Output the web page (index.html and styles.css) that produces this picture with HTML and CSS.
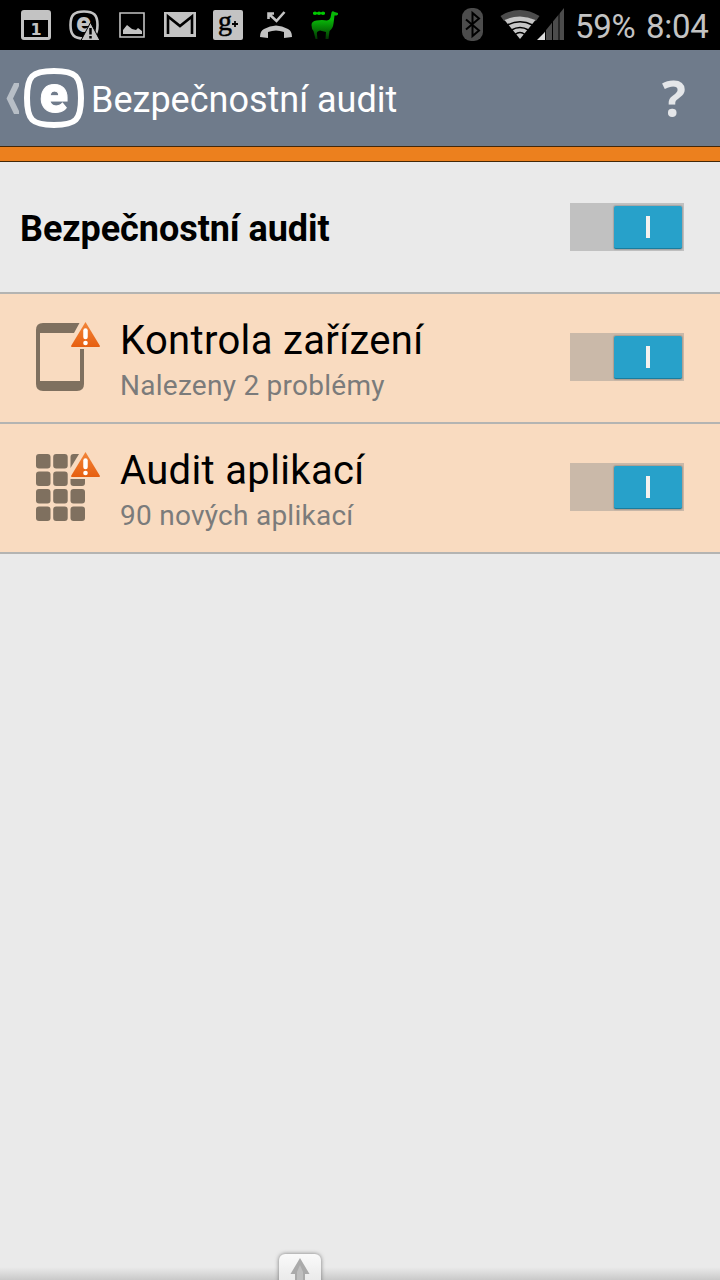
FILE: index.html
```html
<!DOCTYPE html>
<html lang="cs">
<head>
<meta charset="utf-8">
<title>Bezpečnostní audit</title>
<link rel="stylesheet" href="styles.css">
</head>
<body>
<div class="status">
  <div class="notifications">
    <svg class="slot" viewBox="0 0 48 50"><path fill="#c3c3c3" fill-rule="evenodd" d="M12 10h24q3 0 3 3v24q0 3-3 3H12q-3 0-3-3V13q0-3 3-3zM12 20v17h24V20z"/><text class="day" x="24" y="35" text-anchor="middle">1</text></svg>
    <svg class="slot" viewBox="0 0 48 50"><path d="M24 11.500C34 11.500 37.500 15 37.500 25S34 38.500 24 38.500 10.500 35 10.500 25 14 11.500 24 11.500z" fill="none" stroke="#c3c3c3" stroke-width="2.600"/><text class="mini-e" x="23.500" y="32" text-anchor="middle">e</text><path d="M30.500 22.500L40 40.500H21z" fill="#c3c3c3" stroke="#000" stroke-width="1"/><path d="M30.500 28v6.500M30.500 36v2.500" stroke="#000" stroke-width="2.500"/></svg>
    <svg class="slot" viewBox="0 0 48 50"><path d="M12 13h24v24H12z" fill="none" stroke="#c3c3c3" stroke-width="1.600"/><path d="M15 34v-4l4-5 5 4 4 1 2-2 4 3v3z" fill="#c3c3c3"/></svg>
    <svg class="slot" viewBox="0 0 48 50"><path d="M8 12h32v25H8z" fill="#c3c3c3"/><path d="M12 34V16.500L24 26l12-9.500V34" fill="none" stroke="#000" stroke-width="2.600"/></svg>
    <svg class="slot" viewBox="0 0 48 50"><rect x="9" y="10" width="30" height="30" rx="2" fill="#c3c3c3"/><text class="g" x="14" y="29.500">g</text><path d="M28 24h6M31 21v6" stroke="#000" stroke-width="1.800"/></svg>
    <svg class="slot" viewBox="0 0 48 50"><path fill="#c3c3c3" d="M8 37q0-6 4-8 12-7 24 0 4 2 4 8l-8 1v-6q-8-3-16 0v6z"/><path d="M17 14l7.500 7L32.500 12M16.500 19v-5.500H22" fill="none" stroke="#c3c3c3" stroke-width="2.600"/></svg>
    <svg class="slot" viewBox="0 0 48 50"><defs><linearGradient id="green" x1="0" y1="0" x2="0" y2="1"><stop offset=".3" stop-color="#08b808"/><stop offset="1" stop-color="#023502"/></linearGradient></defs><path fill="url(#green)" d="M11.500 25q0-4 5-4.500 6-1 10 0 3 0 4-3l1-5q1-2 3-.5l3.500 1q.5 2-1.500 2.500H34.500l-1 8q-.5 5-4 7.500l-1 8h-3l.5-7-6-1.500q-4 1-3 4l.5 4.500h-2l-2-8q-2-2-2-6z"/><path d="M13 13.300h12" stroke="#00c800" stroke-width="2"/><circle cx="15" cy="13.300" r="1.800" fill="#00c800"/><circle cx="19" cy="13.300" r="1.800" fill="#00c800"/><circle cx="23" cy="13.300" r="1.800" fill="#00c800"/></svg>
  </div>
  <svg class="signals" viewBox="0 0 112 50">
    <rect x="10" y="8" width="21" height="33" rx="9" fill="#4c4c4c"/>
    <path d="M14 19.500l13 11-6.500 5.500V13l6.500 5.500-13 11" fill="none" stroke="#000" stroke-width="2"/>
    <path fill="#4c4c4c" d="M48.500 16q19.500-12 39 0l-3.500 5q-16-8-32 0z"/>
    <path fill="#c6c6c6" d="M52.500 20q15.500-7 31 0L68 39z"/>
    <path d="M55.500 25q12.500-6.500 25 0M59.500 30q8.500-5 17 0M63 34.500q5-4 10 0" fill="none" stroke="#000" stroke-width="1.500"/>
    <path fill="#4c4c4c" d="M92 32.500L112 8v32H92z"/><path fill="#dedede" d="M85 40l8-8v8z"/>
    <path d="M93.500 8v33M100.500 8v33M107 8v33" stroke="#000" stroke-width="1"/>
  </svg>
  <span class="battery">59%</span><span class="clock">8:04</span>
</div>
<header class="bar">
  <svg class="back" viewBox="0 0 92 96"><path fill="#b7bec6" d="M14 33h5v3l-6 12.500 6 12.500v3h-5L6.500 48.500z"/><path d="M54 21C76 21 81 26 81 48S76 75 54 75 27 70 27 48 32 21 54 21z" fill="none" stroke="#fff" stroke-width="6"/><text class="logo-e" x="54" y="61.500" text-anchor="middle">e</text></svg>
  <h1 class="title">Bezpečnostní audit</h1>
  <span class="help">?</span>
</header>
<div class="stripe"></div>
<main>
  <section class="row head">
    <h2 class="heading">Bezpečnostní audit</h2>
    <span class="switch"><span class="thumb"></span></span>
  </section>
  <section class="row warn">
    <svg class="icon" viewBox="0 0 84 90"><defs><linearGradient id="orange" x1="0" y1="0" x2="0" y2="1"><stop stop-color="#f2853a"/><stop offset="1" stop-color="#e65f10"/></linearGradient></defs>
      <path fill="#7f705f" d="M18 9h36.500L49 19H15v48h40V35h4v35q0 7-7 7H18q-7 0-7-7V16q0-7 7-7z"/>
      <path fill="url(#orange)" d="M60.500 8L75 32q0 1-1 1H47q-1 0-1-1z"/><path d="M60.500 16.500v6.500" stroke="#fff" stroke-width="4.500" stroke-linecap="round"/><circle cx="60.500" cy="29" r="2.300" fill="#fff"/></svg>
    <div class="copy"><h3 class="name">Kontrola zařízení</h3><p class="detail">Nalezeny 2 problémy</p></div>
    <span class="switch"><span class="thumb"></span></span>
  </section>
  <section class="row warn">
    <svg class="icon" viewBox="0 0 84 90">
      <g fill="#7f705f"><rect x="11" y="10" width="14.500" height="14.500" rx="3"/><rect x="28.200" y="10" width="14.500" height="14.500" rx="3"/><rect x="11" y="27.500" width="14.500" height="14.500" rx="3"/><rect x="28.200" y="27.500" width="14.500" height="14.500" rx="3"/><rect x="45.500" y="27.500" width="14.500" height="14.500" rx="3"/><rect x="11" y="45" width="14.500" height="14.500" rx="3"/><rect x="28.200" y="45" width="14.500" height="14.500" rx="3"/><rect x="45.500" y="45" width="14.500" height="14.500" rx="3"/><rect x="11" y="62.500" width="14.500" height="14.500" rx="3"/><rect x="28.200" y="62.500" width="14.500" height="14.500" rx="3"/><rect x="45.500" y="62.500" width="14.500" height="14.500" rx="3"/></g>
      <path fill="#f9dbc0" d="M55 8h25v27H43v-3l2-4z"/><path fill="#7f705f" d="M45.500 24V13q0-3 3-3h5.500z"/>
      <path fill="url(#orange)" d="M60.500 8L75 32q0 1-1 1H47q-1 0-1-1z"/><path d="M60.500 16.500v6.500" stroke="#fff" stroke-width="4.500" stroke-linecap="round"/><circle cx="60.500" cy="29" r="2.300" fill="#fff"/></svg>
    <div class="copy"><h3 class="name">Audit aplikací</h3><p class="detail">90 nových aplikací</p></div>
    <span class="switch"><span class="thumb"></span></span>
  </section>
</main>
<footer class="foot"><svg class="handle" viewBox="0 0 60 40"><defs><linearGradient id="key" x1="0" y1="0" x2="0" y2="1"><stop stop-color="#fafafa"/><stop offset="1" stop-color="#e2e2e2"/></linearGradient></defs><rect class="key" x="9" y="14" width="42" height="40" rx="6" fill="url(#key)"/><path d="M30 18L39.500 34H35v8H25v-8h-4.500z" fill="#aaa"/><path d="M30 25l3 7v8h-6v-8z" fill="#bebebe"/></svg></footer>
</body>
</html>
```

FILE: styles.css
```css
* { box-sizing: border-box; }
body { margin: 0; height: 1280px; display: flex; flex-direction: column; overflow: hidden; background: #eaeaea; font-family: Roboto, sans-serif; }
h1, h2, h3, p { margin: 0; font-weight: 400; white-space: nowrap; }
svg { display: block; flex: none; }
.status { height: 50px; flex: none; display: flex; background: #000; color: #c3c3c3; font-size: 33px; line-height: 53px; }
.notifications { display: flex; padding-left: 12px; width: 452px; }
.slot { width: 48px; height: 50px; }
.signals { width: 112px; height: 50px; }
.battery { width: 70px; margin-left: 11px; letter-spacing: -0.3px; }
.clock { margin-left: 1px; letter-spacing: -0.3px; }
.day { font: bold 16px "DejaVu Sans", sans-serif; fill: #c3c3c3; }
.mini-e { font: 900 27px Roboto, sans-serif; fill: #c3c3c3; }
.g { font: 28px "Liberation Serif", serif; fill: #000; stroke: #000; stroke-width: 0.5px; }
.bar { height: 96px; flex: none; display: flex; align-items: center; background: #6f7b8b; color: #fff; }
.back { width: 92px; height: 96px; }
.logo-e { font: 900 52px Roboto, sans-serif; fill: #fff; stroke: #fff; stroke-width: 1px; }
.title { flex: 1; font-size: 36px; line-height: 92px; padding-top: 4px; margin-left: -1px; }
.help { width: 58px; font: bold 50px/96px "Open Sans", sans-serif; color: #e4e6e9; }
.stripe { height: 16px; flex: none; background: #ec801e; border: solid #442808; border-width: 1px 0; }
main { flex: 1; }
.row { height: 130px; display: flex; align-items: center; padding: 0 36px 0 20px; border-bottom: 2px solid #b4b4b2; }
.head { height: 132px; }
.warn { padding: 0 36px 2px 25px; background: #f9dbc0; }
.heading { flex: 1; font-weight: 700; font-size: 36px; line-height: 42px; letter-spacing: -0.06px; padding-top: 4px; color: #000; }
.icon { width: 84px; height: 90px; margin-top: 4px; }
.copy { flex: 1; padding: 7px 0 0 11px; }
.name { font-size: 40px; line-height: 48px; letter-spacing: 0.34px; color: #000; }
.detail { font-size: 28px; line-height: 36px; letter-spacing: 0.26px; color: #7b7b7b; padding-top: 3px; }
.switch { width: 114px; height: 48px; flex: none; display: flex; justify-content: flex-end; padding: 3px 2px 2px; background: #c1c1c1; }
.warn .switch { background: #cab9a9; }
.thumb { width: 68px; display: flex; align-items: center; justify-content: center; background: #27a1ca; border-radius: 2px; border-bottom: 1px solid #197d9e; box-shadow: 0 0 1px 1px rgba(0,0,0,.15); }
.thumb::after { content: ""; width: 4px; height: 22px; background: #f5f2ef; }
.foot { height: 40px; flex: none; padding-left: 270px; background: linear-gradient(#eaeaea 68%, #c9c9c9); }
.handle { width: 60px; height: 40px; }
.key { filter: drop-shadow(0 0 2px #777); }
```
